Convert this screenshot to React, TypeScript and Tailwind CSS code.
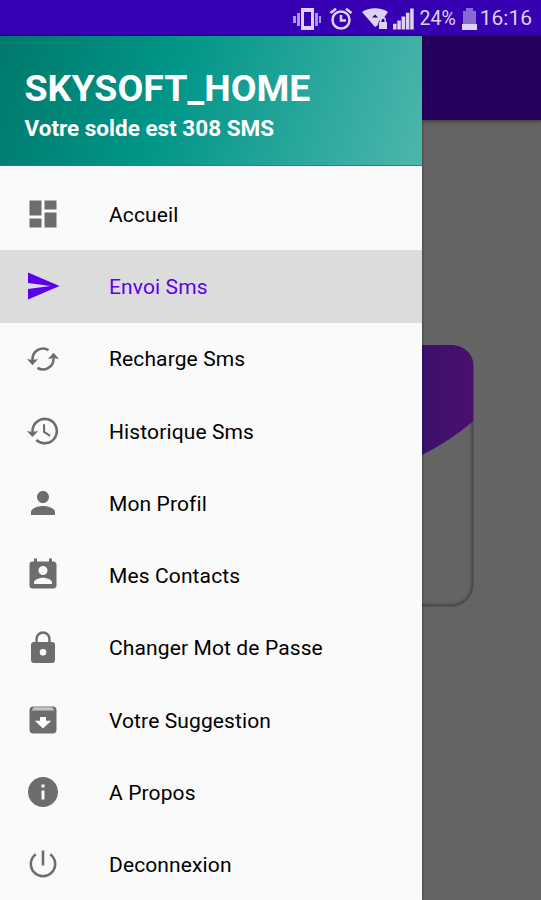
import {
    MdDashboard,
    MdInfo,
    MdPermContactCalendar,
    MdPerson,
    MdSend,
} from 'react-icons/md'

type IconProps = { size?: number; className?: string };

const RechargeIcon = ({ size, className }: IconProps) => (
    <svg width={size} height={size} className={className} viewBox="0 0 24 24" fill="currentColor">
        <path d="M5 13V12A7 7 0 0 1 15.700 6.100M19 11.500V12A7 7 0 0 1 8.300 17.900" fill="none" stroke="currentColor" strokeWidth="1.700" />
        <path d="M1.300 12q3.700 1 7.400 0L5 16.200zM22.700 12q-3.700-1-7.400 0L19 7.800z" />
    </svg>
);

const HistoryIcon = ({ size, className }: IconProps) => (
    <svg width={size} height={size} className={className} viewBox="0 0 24 24" fill="currentColor">
        <path d="M5 13V12A8.100 8.100 0 1 1 7.500 17.900" fill="none" stroke="currentColor" strokeWidth="1.700" />
        <path d="M1.200 12q3.800 1 7.600 0L5 16z" />
        <path d="M12.700 7.500V12.600L16.800 15.200" fill="none" stroke="currentColor" strokeWidth="1.400" />
    </svg>
);

const LockIcon = ({ size, className }: IconProps) => (
    <svg width={size} height={size} className={className} viewBox="0 0 24 24" fill="currentColor">
        <path d="M7.700 9V6a4.300 4.300 0 0 1 8.600 0v3" fill="none" stroke="currentColor" strokeWidth="1.600" />
        <path fillRule="evenodd" d="M6 8h12a2 2 0 0 1 2 2v10a2 2 0 0 1-2 2H6a2 2 0 0 1-2-2V10a2 2 0 0 1 2-2zM12 12.700a2.200 2.200 0 1 0 0 4.400 2.200 2.200 0 0 0 0-4.400z" />
    </svg>
);

const SuggestionIcon = ({ size, className }: IconProps) => (
    <svg width={size} height={size} className={className} viewBox="0 0 24 24" fill="currentColor">
        <rect x="3" y="3" width="18" height="18" rx="2.500" />
        <path className="fill-[#c4c4c4]" d="M5.800 3.500h12.400l1.300 2.200h-15z" />
        <path className="fill-[#fafafa]" d="M10 10h4v2.500h3.500L12 17.700 6.500 12.500H10z" />
    </svg>
);

const PowerIcon = ({ size, className }: IconProps) => (
    <svg width={size} height={size} className={className} viewBox="0 0 24 24" fill="none" stroke="currentColor" strokeWidth="1.700">
        <path d="M12 3v10M7.200 5.500A8.100 8.100 0 1 0 16.800 5.500" />
    </svg>
);

const items = [
    { label: "Accueil", Icon: MdDashboard },
    { label: "Envoi Sms", Icon: MdSend, active: true },
    { label: "Recharge Sms", Icon: RechargeIcon },
    { label: "Historique Sms", Icon: HistoryIcon },
    { label: "Mon Profil", Icon: MdPerson },
    { label: "Mes Contacts", Icon: MdPermContactCalendar },
    { label: "Changer Mot de Passe", Icon: LockIcon },
    { label: "Votre Suggestion", Icon: SuggestionIcon },
    { label: "A Propos", Icon: MdInfo },
    { label: "Deconnexion", Icon: PowerIcon },
];

const StatusBar = () => {
    return (
        <div className="flex h-9 shrink-0 items-center justify-end bg-[#3700b3] pr-[9px] pt-[2px] text-[#dcd2f5]">
            <svg className="mr-2 h-[24px] w-[28px]" viewBox="0 0 28 24" fill="currentColor">
                <path fillRule="evenodd" d="M8 1h13v22H8zM11 5v14h7V5z" />
                <path opacity=".7" d="M4 6h3v13H4zM22 6h3v13h-3zM0 9h3v7H0zM26 9h2v7h-2z" />
            </svg>
            <svg className="mr-[9px] h-[24px] w-[24px]" viewBox="0 0 24 24" fill="none" stroke="currentColor" strokeWidth="2.500">
                <circle cx="12" cy="13" r="8.500" />
                <path d="M12 8v5.500h5M1.500 6L7 1.700M22.500 6L17 1.700" />
            </svg>
            <svg className="mr-[4px] h-[24px] w-[27px]" viewBox="0 0 27 24" fill="currentColor">
                <path d="M0 5C7 0 19 0 26 5l-5 7c-3 0-5 3-5 6l-3 2z" />
                <path className="fill-[#25005c]" d="M10 10.500l3-3 3 3z" />
                <path fillRule="evenodd" d="M17 15h1v-2a3 3 0 0 1 6 0v2h1v7h-8zM19.500 15h3v-2a1.500 1.500 0 0 0-3 0z" />
            </svg>
            <svg className="mr-[6px] h-[22px] w-[21px]" viewBox="0 0 22 22" fill="currentColor">
                <path d="M0 16h3.700v6H0zM4.500 12.500h3.700V22H4.500zM9 8.500h3.700V22H9zM13.500 4.500h3.700V22h-3.700zM18 0h3.700v22H18z" />
            </svg>
            <span className="mr-[6px] text-[19.500px]">24%</span>
            <svg className="mr-[3px] h-[22px] w-[15px]" viewBox="0 0 15 22" fill="currentColor">
                <path opacity=".5" d="M4 0h7v3h3v13H1V3h3z" />
                <path d="M0 16h15v6H0z" />
            </svg>
            <span className="text-[21px]">16:16</span>
        </div>
    );
};

const Drawer = () => {
    return (
        <div className="relative z-10 w-[422px] shrink-0 bg-[#fafafa] shadow-[0_0_3px_rgba(0,0,0,0.5)]">
            <div className="h-[130px] border-b border-[#009688] bg-[linear-gradient(108deg,#00796b_0%,#009688_40%,#4db6ac_100%)] pt-[30px] pl-[24.500px] font-bold text-white">
                <h1 className="text-[37.500px] leading-[44px]">SKYSOFT_HOME</h1>
                <p className="mt-[5px] text-[22.500px] leading-[26px]">Votre solde est 308 SMS</p>
            </div>
            <ul className="pt-[12px]">
                {items.map(({ label, Icon, active }) => (
                    <li
                        key={label}
                        className={active
                            ? "flex h-[72.25px] items-center bg-[#dcdcdc] pl-[24.500px] text-[#5c00ea]"
                            : "flex h-[72.25px] items-center pl-[24.500px] text-black"}
                    >
                        <Icon size={36} className={active ? "mr-[48.500px]" : "mr-[48.500px] text-[#6d6d6d]"} />
                        <span className="pt-[3px] text-[21px] font-[450] tracking-[0.12px]">{label}</span>
                    </li>
                ))}
            </ul>
        </div>
    );
};

const Backdrop = () => {
    return (
        <div className="flex-1 bg-[#646464]">
            <div className="h-[84px] bg-[#25005c] shadow-[0_1px_4px_rgba(0,0,0,0.5)]"></div>
            <svg className="mt-[224px] block h-[264px] w-[54px]" viewBox="0 0 54 264">
                <defs>
                    <linearGradient id="card">
                        <stop offset="0" stopColor="#39116b" />
                        <stop offset="1" stopColor="#4b0f70" />
                    </linearGradient>
                </defs>
                <path d="M0 260.500H29C41 260.500 49.500 252 49.500 240V77" fill="none" stroke="#5b5b5b" strokeWidth="4" />
                <path d="M0 261.500H29C41 261.500 50.500 252 50.500 240V77" fill="none" stroke="#4c4c4c" strokeWidth="2" />
                <path d="M0 1H29C42 1 51.500 10 51.500 22V77Q28 97 0 111z" fill="url(#card)" />
            </svg>
        </div>
    );
};

const App = () => {
    return (
        <div className="flex h-[900px] w-[541px] flex-col overflow-hidden font-[Roboto,sans-serif]">
            <StatusBar />
            <div className="flex flex-1">
                <Drawer />
                <Backdrop />
            </div>
        </div>
    );
};

export default App;
